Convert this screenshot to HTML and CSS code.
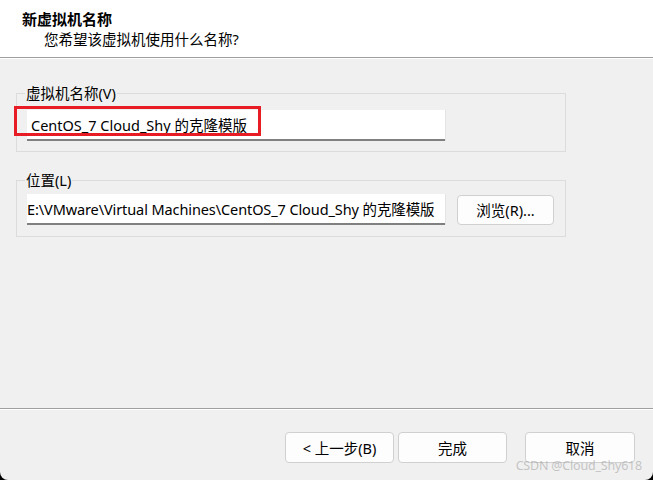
FILE: index.html
```html
<!DOCTYPE html>
<html>
<head>
    <title>新建虚拟机向导</title>
    <link rel="stylesheet" href="styles.css">
</head>
<body>

<div class="window">
    <div class="header">
        <div class="title">新虚拟机名称</div>
        <div class="subtitle">您希望该虚拟机使用什么名称?</div>
    </div>

    <div class="content">
        <fieldset class="group group-name">
            <legend>虚拟机名称(V)</legend>
            <div class="field">
                <input class="text-input" type="text" value="CentOS_7 Cloud_Shy 的克隆模版">
                <div class="highlight"></div>
            </div>
        </fieldset>

        <fieldset class="group group-location">
            <legend>位置(L)</legend>
            <div class="field-row">
                <input class="text-input path" type="text" value="E:\VMware\Virtual Machines\CentOS_7 Cloud_Shy 的克隆模版">
                <button class="btn btn-browse">浏览(R)...</button>
            </div>
        </fieldset>
    </div>

    <div class="footer">
        <button class="btn">&lt; 上一步(B)</button>
        <button class="btn btn-finish">完成</button>
        <button class="btn btn-cancel">取消</button>
        <span class="watermark">CSDN @Cloud_Shy618</span>
    </div>
</div>

</body>
</html>
```

FILE: styles.css
```css
body {
    margin: 0;
    background-color: #000;
    font-family: "Noto Sans", "Noto Sans CJK SC", sans-serif;
    font-size: 14.5px;
    color: #000;
}
.window {
    width: 653px;
    height: 480px;
    background-color: #f0f0f0;
    border-radius: 0 0 8px 8px;
    display: flex;
    flex-direction: column;
    position: relative;
    overflow: hidden;
}
.header {
    height: 58px;
    box-sizing: border-box;
    background-color: #fff;
    border-bottom: 1px solid #a0a0a0;
    box-shadow: 0 1px 0 #fff;
    padding: 9px 0 0 22px;
}
.title {
    font-weight: bold;
    font-size: 15px;
    line-height: 20px;
}
.subtitle {
    margin-left: 22px;
    line-height: 21px;
}
.content {
    flex: 1;
    padding: 27px 0 0 16px;
}
.group {
    width: 550px;
    box-sizing: border-box;
    margin: 0;
    border: 1px solid #dcdcdc;
    padding: 9px 0 10px 10px;
}
.group legend {
    padding: 0 1px;
    margin-left: -2px;
    line-height: 16px;
}
.group-location {
    margin-top: 20px;
    padding-top: 6px;
    padding-bottom: 11px;
}
.field {
    position: relative;
}
.field-row {
    display: flex;
    align-items: center;
    gap: 12px;
}
.text-input {
    width: 418px;
    height: 31px;
    box-sizing: border-box;
    border: none;
    border-bottom: 2px solid #808080;
    box-shadow: 1px 0 0 #e4e4e4;
    background: #fff;
    padding: 0 0 0 4px;
    font-family: inherit;
    font-size: 14.5px;
    color: #000;
    outline: none;
}
.text-input.path {
    padding-left: 0;
    letter-spacing: -0.1px;
}
.highlight {
    position: absolute;
    left: -13px;
    top: -4px;
    width: 247px;
    height: 30px;
    box-sizing: border-box;
    border: 3px solid #e81c24;
}
.btn {
    height: 31px;
    width: 109px;
    box-sizing: border-box;
    background: #fdfdfd;
    border: 1px solid #d0d0d0;
    border-radius: 4px;
    font-family: inherit;
    font-size: 14.5px;
    color: #000;
    padding: 0;
}
.btn-browse {
    width: 97px;
    height: 30px;
}
.footer {
    height: 72px;
    box-sizing: border-box;
    border-top: 1px solid #a0a0a0;
    box-shadow: inset 0 1px 0 #fff;
    display: flex;
    justify-content: flex-end;
    padding: 23px 18px 0 0;
    gap: 4px;
}
.btn-cancel {
    width: 110px;
    margin-left: 14px;
}
.watermark {
    position: absolute;
    right: 11px;
    bottom: 6px;
    font-size: 12.5px;
    color: rgba(150, 150, 150, 0.5);
    letter-spacing: -0.2px;
}
```
